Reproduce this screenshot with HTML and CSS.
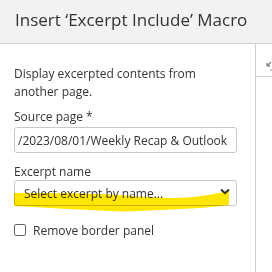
FILE: index.html
```html
<!DOCTYPE html>
<html lang="en">
<head>
    <meta charset="UTF-8">
    <title>Insert Excerpt Include Macro</title>
    <link rel="stylesheet" href="styles.css">
</head>
<body>
    <div class="dialog">
        <div class="dialog-header">
            <h1>Insert ‘Excerpt Include’ Macro</h1>
        </div>
        <div class="dialog-body">
            <div class="form-panel">
                <p class="description">Display excerpted contents from another page.</p>

                <label class="field-label" for="sourcePage">Source page *</label>
                <input class="text-input" id="sourcePage" type="text" value="/2023/08/01/Weekly Recap &amp; Outlook">

                <label class="field-label tight" for="excerptName">Excerpt name</label>
                <div class="select-wrap">
                    <div class="select-box" id="excerptName">
                        <span>Select excerpt by name...</span>
                        <svg class="chevron" width="10" height="7" viewBox="0 0 10 7">
                            <path d="M1 1.5 L5 5.2 L9 1.5" fill="none" stroke="#333" stroke-width="2"/>
                        </svg>
                    </div>
                    <!-- yellow marker scribble over the select -->
                    <svg class="marker" width="216" height="34" viewBox="0 0 216 34">
                        <path d="M0 13 C30 13 60 13 86 14 C110 15 140 18 160 18 C180 18 195 15 215 11 L215 25 C200 27 175 29 146 30 C125 31 110 32 95 31 C70 30 40 28 0 26 Z" fill="#ffe600"/>
                    </svg>
                </div>

                <label class="check-row">
                    <span class="checkbox"></span>
                    Remove border panel
                </label>
            </div>
            <div class="side-panel">
                <div class="side-top">
                    <svg class="side-icon" width="8" height="10" viewBox="0 0 8 10">
                        <path d="M1 4 L5 0 M1 4 L1 1 M1 4 L4 4" stroke="#888" stroke-width="1.4" fill="none"/>
                        <path d="M4 8 L7 8" stroke="#999" stroke-width="1.2"/>
                    </svg>
                </div>
            </div>
        </div>
    </div>
</body>
</html>
```

FILE: styles.css
```css
* {
    margin: 0;
    padding: 0;
    box-sizing: border-box;
}

body {
    width: 272px;
    height: 272px;
    overflow: hidden;
    background: #fff;
    font-family: 'Open Sans', 'Noto Sans', sans-serif;
    color: #333;
}

.dialog-header {
    height: 44px;
    background: #f2f2f2;
    border-bottom: 1px solid #cfcfcf;
    padding: 8px 0 0 15px;
}

.dialog-header h1 {
    font-size: 17px;
    font-weight: 400;
    color: #333;
    white-space: nowrap;
}

.dialog-body {
    display: flex;
    height: 228px;
}

.form-panel {
    width: 256px;
    padding: 21px 19px 0 14px;
    border-right: 1px solid #cfcfcf;
}

.description {
    font-size: 12px;
    line-height: 18px;
    margin-bottom: 8px;
}

.field-label {
    display: block;
    font-size: 12px;
    line-height: 16px;
    margin-bottom: 2px;
}

.field-label.tight {
    margin-bottom: 0;
}

.text-input {
    display: block;
    width: 223px;
    height: 26px;
    border: 1px solid #c8c8c8;
    border-radius: 3px;
    padding: 0 3px;
    font-family: inherit;
    font-size: 12px;
    color: #333;
    margin-bottom: 11px;
    outline: none;
}

.select-wrap {
    position: relative;
    margin-bottom: 16px;
}

.select-box {
    width: 223px;
    height: 26px;
    border: 1px solid #c8c8c8;
    border-radius: 3px;
    display: flex;
    align-items: center;
    justify-content: space-between;
    padding: 0 6px 0 9px;
    font-size: 12px;
}

.chevron {
    margin-top: -4px;
}

.marker {
    position: absolute;
    left: 0;
    top: 0;
    mix-blend-mode: multiply;
    pointer-events: none;
}

.check-row {
    display: flex;
    align-items: center;
    gap: 7px;
    height: 16px;
    font-size: 12px;
}

.checkbox {
    width: 12px;
    height: 12px;
    border: 1px solid #666;
    border-radius: 2px;
}

.side-panel {
    flex: 1;
}

.side-top {
    height: 33px;
    border-bottom: 1px solid #cfcfcf;
    padding: 11px 0 0 10px;
}
```
